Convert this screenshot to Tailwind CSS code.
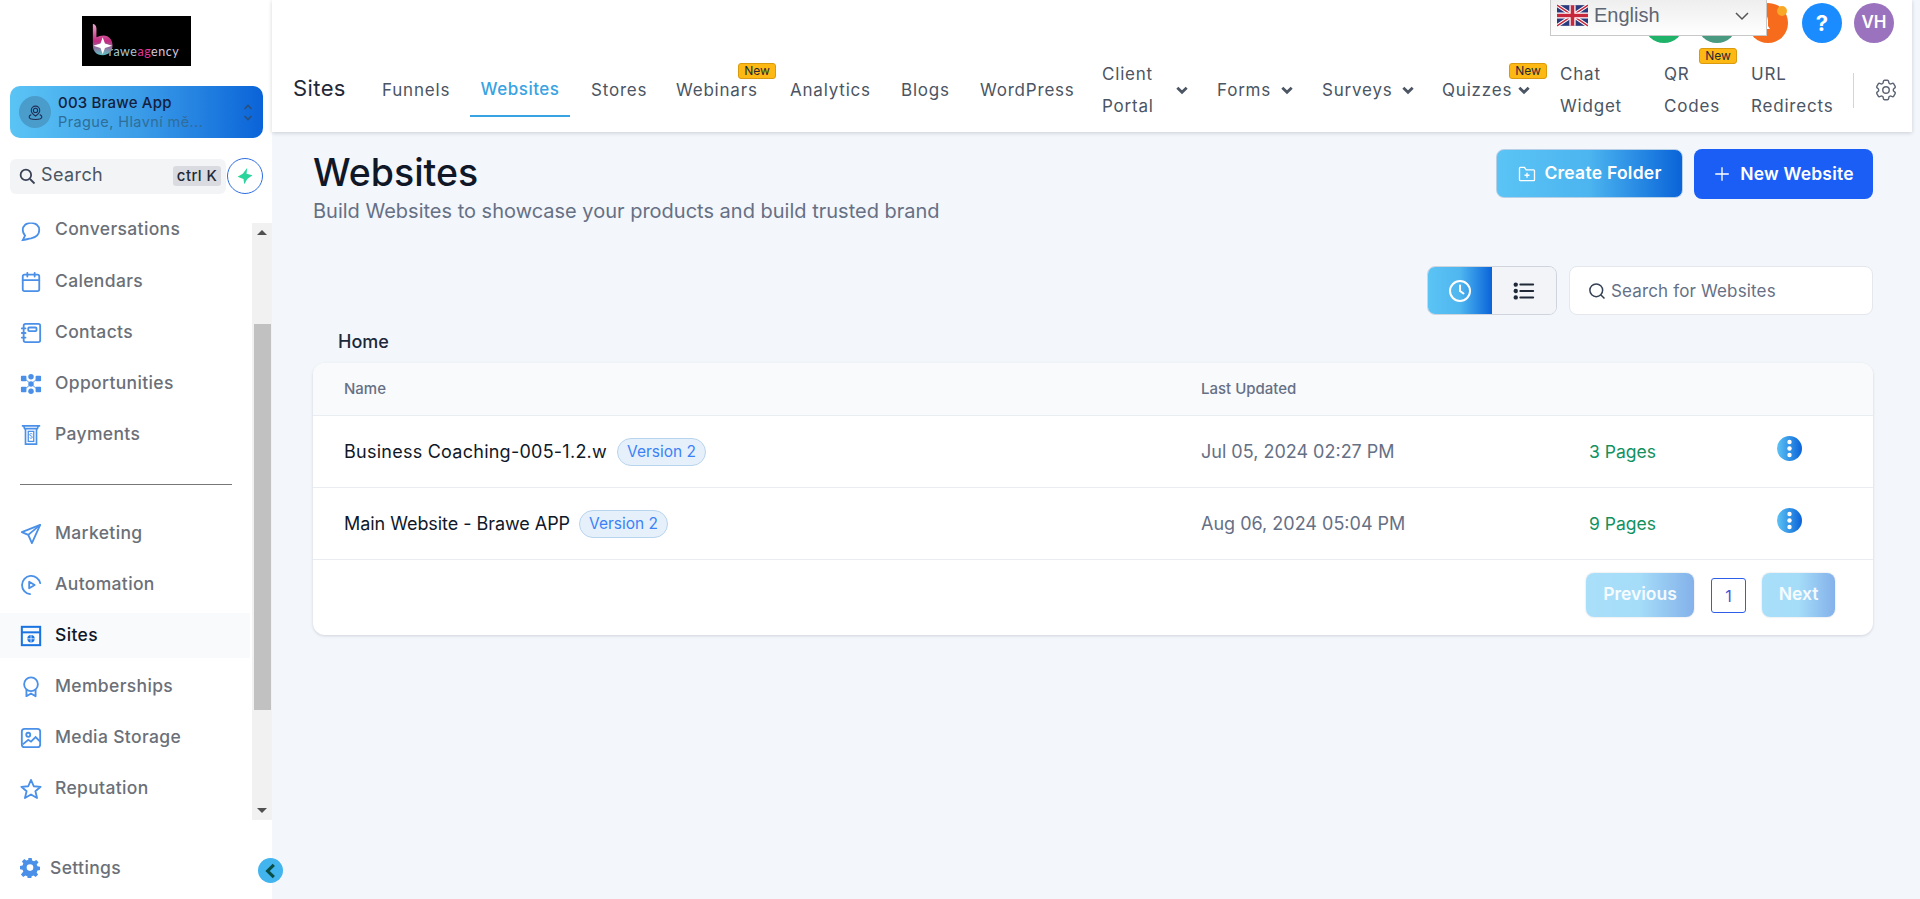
<!DOCTYPE html>
<html lang="en">
<head>
  <meta charset="UTF-8" />
  <title>Websites</title>
  <script src="https://cdn.jsdelivr.net/npm/@tailwindcss/browser@4"></script>
</head>
<body class="bg-[#f3f6fb] font-['Inter',sans-serif] h-[899px] overflow-hidden">
  <svg width="0" height="0" class="absolute">
    <defs>
      <linearGradient id="kebabGrad" x1="0" x2="1"><stop offset="0" stop-color="#5cc3f4"/><stop offset="1" stop-color="#0a63d8"/></linearGradient>
      <linearGradient id="logoGrad" x1="0" x2="0" y1="0" y2="1"><stop offset="0" stop-color="#f0a8d0"/><stop offset="0.55" stop-color="#c2287e"/><stop offset="1" stop-color="#5bc4c4"/></linearGradient>
    </defs>
  </svg>

  <div class="flex h-[899px]">
    <!-- Sidebar -->
    <aside class="w-[272px] shrink-0 bg-white relative flex flex-col">
      <div class="h-[86px] pt-4 flex justify-center">
        <div class="w-[109px] h-[50px] bg-black flex items-end pb-[7px] relative">
          <svg viewBox="0 0 30 38" class="w-[27px] h-[34px] absolute left-[9px] top-[7px]">
            <path d="M2 1c2 0 4 2 4 5v10c2-1 5-2 8-2 6 0 10 5 10 11s-4 11-11 11S2 32 2 25z" fill="url(#logoGrad)"/>
            <path d="M13 16l2.500 7 8 2.500-8 2.500-2.500 7-2.500-7-8-2.500 8-2.500z" fill="#fff"/>
          </svg>
          <span class="ml-[27px] text-[12.500px] leading-[14px] tracking-[0.5px] font-['Lato',sans-serif] text-[#a8c8d0]">rawe<span class="text-[#e0359a]">ag</span><span class="text-[#d8c6dc]">ency</span></span>
        </div>
      </div>

      <!-- Location card -->
      <div class="mx-[10px] w-[253px] h-[52px] rounded-[10px] bg-linear-to-r from-[#5bc4f5] via-[#3c9de8] to-[#0a63d8] flex items-center pl-[9px] pr-[6px]">
        <div class="w-8 h-8 rounded-full bg-[#4a9ccb] flex items-center justify-center mr-[7px]">
          <svg viewBox="0 0 24 24" class="w-[17px] h-[17px]" fill="none" stroke="#1f2f55" stroke-width="1.500"><circle cx="12" cy="9" r="3"/><path d="M12 17c-4-3-6-5.500-6-8a6 6 0 0 1 12 0c0 2.500-2 5-6 8z"/><path d="M6 15c-2 .7-3 1.700-3 3.500C3 20.500 7 22 12 22s9-1.500 9-3.500c0-1.800-1-2.800-3-3.500"/></svg>
        </div>
        <div class="flex-1 min-w-0">
          <div class="text-[15px] leading-[19px] font-medium text-[#14203d] tracking-[0.2px]">003 Brawe App</div>
          <div class="text-[14.500px] leading-[19px] text-[#2f6e99] tracking-[0.4px]">Prague, Hlavní mě...</div>
        </div>
        <svg viewBox="0 0 16 24" class="w-[14px] h-[21px] mr-[2px]" fill="none" stroke="#29507f" stroke-width="2"><path d="M4 8l4-4 4 4M4 16l4 4 4-4"/></svg>
      </div>

      <!-- Search -->
      <div class="mt-5 ml-[10px] flex items-center w-[253px]">
        <div class="w-[217px] h-[35px] bg-[#f3f4f6] rounded-[6px] flex items-center pl-2 pr-[5px]">
          <svg viewBox="0 0 24 24" class="w-[18px] h-[18px] mr-[5px]" fill="none" stroke="#3a4356" stroke-width="2.400"><circle cx="10.500" cy="10.500" r="7"/><path d="M16 16l6 6"/></svg>
          <span class="flex-1 text-[18px] leading-[24px] pb-[2px] text-[#4b5563] tracking-[0.4px]">Search</span>
          <span class="bg-[#d9dbe0] rounded-[3px] text-[15px] leading-[20px] px-[4px] text-[#1f2937] font-medium tracking-[0.4px]">ctrl K</span>
        </div>
        <div class="w-[36px] h-[36px] rounded-full border border-[#2f6fe0] bg-white flex items-center justify-center ml-[1px]">
          <svg viewBox="0 0 24 24" class="w-[18px] h-[18px]" fill="#2bd49b"><path d="M15 1l-1 8 8 2-7 5-4 7-1-7-8-3 7-4z"/></svg>
        </div>
      </div>

      <!-- Nav, scrolled a little -->
      <div class="mt-[22px] h-[604px] relative overflow-hidden">
        <nav class="-mt-[11px] text-[#6b7078] text-[17.500px] font-medium tracking-[0.35px]">
          <a class="h-[51px] flex items-center pl-5 gap-[13px]">
            <svg viewBox="0 0 24 24" class="w-[22px] h-[22px] shrink-0 [clip-path:inset(3px_0_0_0)]" fill="none" stroke="#4a90e8" stroke-width="2"><path d="M3 22l2.500-5C4.500 15.500 3 14 3 11c0-5 4-8 9-8s9 3 9 8-4 8-9 9c-3 .5-6 1.500-9 2z"/></svg>
            <span class="relative -top-[1px]">Conversations</span>
          </a>
          <a class="h-[51px] flex items-center pl-5 gap-[13px]">
            <svg viewBox="0 0 24 24" class="w-[22px] h-[22px] shrink-0" fill="none" stroke="#4a90e8" stroke-width="2" stroke-linecap="round"><rect x="3" y="4" width="18" height="18" rx="2"/><path d="M3 10h18M8 2v4M16 2v4"/></svg>
            <span>Calendars</span>
          </a>
          <a class="h-[51px] flex items-center pl-5 gap-[13px]">
            <svg viewBox="0 0 24 24" class="w-[22px] h-[22px] shrink-0" fill="none" stroke="#4a90e8" stroke-width="2" stroke-linecap="round"><rect x="4" y="2" width="18" height="20" rx="2"/><rect x="9" y="6" width="9" height="4" rx="1"/><path d="M2 7h4M2 12h4M2 17h4"/></svg>
            <span>Contacts</span>
          </a>
          <a class="h-[51px] flex items-center pl-5 gap-[13px]">
            <svg viewBox="0 0 24 24" class="w-[24px] h-[22px] shrink-0 -ml-[1px] -mr-[1px]" fill="#4a90e8"><circle cx="12" cy="12" r="3"/><circle cx="12" cy="4" r="3"/><circle cx="12" cy="20" r="3"/><rect x="1" y="3" width="6" height="6" rx="1"/><rect x="17" y="3" width="6" height="6" rx="1"/><rect x="1" y="15" width="6" height="6" rx="1"/><rect x="17" y="15" width="6" height="6" rx="1"/><path d="M6 7l6 5 6-5M6 17l6-5 6 5" stroke="#4a90e8" fill="none"/></svg>
            <span>Opportunities</span>
          </a>
          <a class="h-[51px] flex items-center pl-5 gap-[13px]">
            <svg viewBox="0 0 24 24" class="w-[22px] h-[22px] shrink-0" fill="none" stroke="#4a90e8" stroke-width="1.800"><path d="M2 2h20M4 2l1 3h14l1-3M6 5v17h12V5"/><rect x="9" y="8" width="6" height="11" stroke-width="1.400"/><path d="M13.500 11c-.5-.8-3-.8-3 .7s3 1 3 2.600-2.500 1.500-3 .7" stroke-width="1"/></svg>
            <span>Payments</span>
          </a>
          <div class="h-[24px]"></div>
          <div class="ml-5 w-[212px] border-t border-[#777]"></div>
          <div class="h-[23px]"></div>
          <a class="h-[51px] flex items-center pl-5 gap-[13px]">
            <svg viewBox="0 0 24 24" class="w-[22px] h-[22px] shrink-0" fill="none" stroke="#4a90e8" stroke-width="2" stroke-linejoin="round"><path d="M22 2L2 10l7 3 4 9z"/><path d="M22 2L9 13"/></svg>
            <span>Marketing</span>
          </a>
          <a class="h-[51px] flex items-center pl-5 gap-[13px]">
            <svg viewBox="0 0 24 24" class="w-[22px] h-[22px] shrink-0" fill="none" stroke="#4a90e8" stroke-width="2" stroke-linecap="round"><path d="M22 10A10 10 0 1 0 11 22"/><path d="M10 8.500v7l6-3.500z" stroke-linejoin="round"/></svg>
            <span>Automation</span>
          </a>
          <a class="h-[45px] my-[3px] bg-[#f9fafb] flex items-center pl-5 gap-[13px] w-[250px] text-[#101828]">
            <svg viewBox="0 0 24 24" class="w-[22px] h-[22px] shrink-0" fill="none" stroke="#1a73e0" stroke-width="2.200"><rect x="2" y="2" width="20" height="20"/><path d="M2 8h20" /><circle cx="12" cy="15" r="4" fill="#1a73e0" stroke="none"/><path d="M8 15h8M12 11v8" stroke="#fff" stroke-width="0.800"/></svg>
            <span>Sites</span>
          </a>
          <a class="h-[51px] flex items-center pl-5 gap-[13px]">
            <svg viewBox="0 0 24 24" class="w-[22px] h-[22px] shrink-0" fill="none" stroke="#4a90e8" stroke-width="2" stroke-linejoin="round"><circle cx="12" cy="9" r="7.500"/><path d="M7 15v7l5-3 5 3v-7"/></svg>
            <span>Memberships</span>
          </a>
          <a class="h-[51px] flex items-center pl-5 gap-[13px]">
            <svg viewBox="0 0 24 24" class="w-[22px] h-[22px] shrink-0" fill="none" stroke="#4a90e8" stroke-width="2"><rect x="2" y="2" width="20" height="20" rx="3"/><circle cx="9" cy="8.500" r="2.200"/><path d="M3 19l6-5 3 2 5-5 5 5"/></svg>
            <span>Media Storage</span>
          </a>
          <a class="h-[51px] flex items-center pl-5 gap-[13px]">
            <svg viewBox="0 0 24 24" class="w-[22px] h-[22px] shrink-0" fill="none" stroke="#4a90e8" stroke-width="2" stroke-linejoin="round"><path d="M12 2l3 7 7.500.6-5.700 4.800 1.800 7.400L12 18l-6.600 3.800 1.800-7.400L1.500 9.600 9 9z"/></svg>
            <span>Reputation</span>
          </a>
        </nav>
        <!-- scrollbar -->
        <div class="absolute right-0 top-[7px] w-[20px] h-[597px] bg-[#f1f1f1]">
          <div class="absolute left-[5px] top-[7px] w-0 h-0 border-x-[5px] border-x-transparent border-b-[5px] border-b-[#505050]"></div>
          <div class="absolute left-[2px] top-[101px] w-[17px] h-[386px] bg-[#c1c1c1]"></div>
          <div class="absolute left-[5px] bottom-[7px] w-0 h-0 border-x-[5px] border-x-transparent border-t-[5px] border-t-[#505050]"></div>
        </div>
      </div>

      <!-- Settings -->
      <div class="mt-[35px] pl-5 flex items-center gap-[10px] text-[#6b7078] text-[17.500px] font-medium tracking-[0.35px]">
        <svg viewBox="0 0 24 24" class="w-[20px] h-[20px]" fill="#4a90e8"><path fill-rule="evenodd" d="M10 1h4l.6 3 2.300 1 2.600-1.700 2.800 2.800L20 8.700l1 2.300 3 .6v3.800l-3 .6-1 2.300 1.700 2.600-2.800 2.800-2.600-1.700-2.300 1-.6 3h-4l-.6-3-2.300-1-2.600 1.700-2.800-2.800L4 17.300l-1-2.300-3-.6v-3.800l3-.6 1-2.300-1.700-2.600 2.800-2.800 2.600 1.700 2.300-1zm2 7.500a4 4 0 1 0 0 8 4 4 0 0 0 0-8z" transform="translate(0 -1)"/></svg>
        <span>Settings</span>
      </div>
      <button class="absolute left-[258px] top-[858px] w-[25px] h-[25px] rounded-full bg-[#42b4ee] flex items-center justify-center z-10">
        <svg viewBox="0 0 16 16" class="w-[18px] h-[18px]" fill="none" stroke="#0a4f45" stroke-width="2.800"><path d="M10.500 2.500L5 8l5.500 5.500"/></svg>
      </button>
    </aside>

    <!-- Main -->
    <main class="flex-1 min-w-0">
      <!-- Top bar -->
      <header class="w-[1640px] h-[132px] bg-white shadow-[0_1px_4px_rgba(16,24,40,0.18)] relative">
        <div class="absolute top-[3px] left-[1372px] w-[40px] h-[40px] rounded-full bg-[#1fb36a]"></div>
        <div class="absolute top-[3px] left-[1425px] w-[40px] h-[40px] rounded-full bg-[#4a9a82]"></div>
        <div class="absolute top-[3px] left-[1476px] w-[40px] h-[40px] rounded-full bg-[#f76b1c] flex items-center justify-center">
          <svg viewBox="0 0 24 24" class="w-[24px] h-[24px] -ml-[14px]" fill="#fff"><path d="M12 2a7 7 0 0 0-7 7v6l-2 3h18l-2-3V9a7 7 0 0 0-7-7zM10 19a2 2 0 0 0 4 0z"/></svg>
          <span class="absolute right-[1px] top-[3px] w-[10px] h-[10px] rounded-full bg-[#f9a825]"></span>
        </div>
        <div class="absolute top-[3px] left-[1530px] w-[40px] h-[40px] rounded-full bg-[#1a8cff] flex items-center justify-center text-white text-[22px] font-bold">?</div>
        <div class="absolute top-[3px] left-[1582px] w-[40px] h-[40px] rounded-full bg-[#9b72bd] flex items-center justify-center text-white text-[17px] font-semibold">VH</div>

        <!-- language picker -->
        <div class="absolute left-[1278px] top-0 w-[217px] h-[36px] pb-[5px] bg-linear-to-b from-[#eeeeee] to-white border border-[#c8c8c8] border-t-0 flex items-center pl-[6px] z-10 font-['Liberation_Sans',sans-serif] text-[20px] text-[#5f6673]">
          <svg viewBox="0 0 60 40" class="w-[31px] h-[23px] mr-[6px]">
            <rect width="60" height="40" fill="#2a3a7c"/>
            <path d="M0 0l60 40M60 0L0 40" stroke="#fff" stroke-width="7"/>
            <path d="M0 0l60 40M60 0L0 40" stroke="#c8283c" stroke-width="3"/>
            <path d="M30 0v40M0 20h60" stroke="#fff" stroke-width="12"/>
            <path d="M30 0v40M0 20h60" stroke="#c8283c" stroke-width="7"/>
          </svg>
          <span>English</span>
          <svg viewBox="0 0 16 16" class="w-[16px] h-[16px] absolute right-[16px] top-[8px]" fill="none" stroke="#555" stroke-width="1.500"><path d="M2 5l6 6 6-6"/></svg>
        </div>

        <!-- Tabs -->
        <div class="absolute left-0 top-[53px] w-full h-[74px] flex items-center text-[17px] text-[#4b5563] tracking-[0.8px]">
          <div class="w-[110px] pl-[21px] text-[22px] text-[#1f2937] tracking-[0.4px] -mt-[4px]">Sites</div>
          <a class="w-[88px] pt-[2px]">Funnels</a>
          <a class="w-[100px] h-[64px] pt-[12px] mr-[21px] self-start flex items-center justify-center text-[#38a3e3] font-medium tracking-[0.5px] border-b-2 border-[#38a3e3]">Websites</a>
          <a class="w-[85px] pt-[2px]">Stores</a>
          <a class="w-[114px] pt-[2px] relative">Webinars
            <span class="absolute -top-[13px] left-[62px] w-[38px] h-[16px] rounded-[3px] bg-[#fdb813] border border-[#d99a10] text-[12px] leading-[14px] text-center text-[#1f2937] tracking-normal">New</span>
          </a>
          <a class="w-[111px] pt-[2px]">Analytics</a>
          <a class="w-[79px] pt-[2px]">Blogs</a>
          <a class="w-[122px] pt-[2px]">WordPress</a>
          <a class="w-[74px] leading-[32px]">Client<br />Portal</a>
          <svg viewBox="0 0 12 12" class="w-[14px] h-[14px] -ml-[1px] mr-[28px]" fill="none" stroke="#4b5563" stroke-width="2.400"><path d="M2 4l4 4 4-4"/></svg>
          <a class="w-[64px] pt-[2px]">Forms</a>
          <svg viewBox="0 0 12 12" class="w-[14px] h-[14px] -ml-[1px] mr-[28px]" fill="none" stroke="#4b5563" stroke-width="2.400"><path d="M2 4l4 4 4-4"/></svg>
          <a class="w-[80px] pt-[2px]">Surveys</a>
          <svg viewBox="0 0 12 12" class="w-[14px] h-[14px] -ml-[1px] mr-[27px]" fill="none" stroke="#4b5563" stroke-width="2.400"><path d="M2 4l4 4 4-4"/></svg>
          <a class="w-[76px] pt-[2px] relative">Quizzes
            <span class="absolute -top-[13px] left-[67px] w-[38px] h-[16px] rounded-[3px] bg-[#fdb813] border border-[#d99a10] text-[12px] leading-[14px] text-center text-[#1f2937] tracking-normal">New</span>
          </a>
          <svg viewBox="0 0 12 12" class="w-[14px] h-[14px] -ml-[1px] mr-[29px]" fill="none" stroke="#4b5563" stroke-width="2.400"><path d="M2 4l4 4 4-4"/></svg>
          <a class="w-[104px] leading-[32px]">Chat<br />Widget</a>
          <a class="w-[87px] leading-[32px] relative">QR<br />Codes
            <span class="absolute -top-[10px] left-[35px] w-[38px] h-[16px] rounded-[3px] bg-[#fdb813] border border-[#d99a10] text-[12px] leading-[14px] text-center text-[#1f2937] tracking-normal">New</span>
          </a>
          <a class="w-[102px] leading-[32px]">URL<br />Redirects</a>
          <div class="w-[1px] h-[35px] bg-[#d0d5dd]"></div>
          <svg viewBox="0 0 24 24" class="w-[26px] h-[26px] ml-[19px]" fill="none" stroke="#5b6472" stroke-width="1.300"><path d="M9.594 3.94c.09-.542.56-.94 1.110-.94h2.593c.55 0 1.020.398 1.110.94l.213 1.281c.063.374.313.686.645.870.074.040.147.083.220.127.325.196.72.257 1.075.124l1.217-.456a1.125 1.125 0 0 1 1.370.490l1.296 2.247a1.125 1.125 0 0 1-.260 1.431l-1.003.827c-.293.241-.438.613-.430.992a7.723 7.723 0 0 1 0 .255c-.008.378.137.750.430.991l1.004.827c.424.350.534.955.260 1.430l-1.298 2.247a1.125 1.125 0 0 1-1.369.491l-1.217-.456c-.355-.133-.750-.072-1.076.124a6.470 6.470 0 0 1-.220.128c-.331.183-.581.495-.644.869l-.213 1.281c-.090.543-.560.940-1.110.940h-2.594c-.550 0-1.019-.398-1.110-.940l-.213-1.281c-.062-.374-.312-.686-.644-.870a6.520 6.520 0 0 1-.220-.127c-.325-.196-.720-.257-1.076-.124l-1.217.456a1.125 1.125 0 0 1-1.369-.490l-1.297-2.247a1.125 1.125 0 0 1 .260-1.431l1.004-.827c.292-.240.437-.613.430-.991a6.932 6.932 0 0 1 0-.255c.007-.380-.138-.751-.430-.992l-1.004-.827a1.125 1.125 0 0 1-.260-1.430l1.297-2.247a1.125 1.125 0 0 1 1.370-.491l1.216.456c.356.133.751.072 1.076-.124.072-.044.146-.086.220-.128.332-.183.582-.495.644-.869l.214-1.280Z"/><circle cx="12" cy="12" r="3"/></svg>
        </div>
      </header>

      <!-- Page content -->
      <div class="w-[1560px] ml-[41px]">
        <div class="flex items-start justify-between h-[134px] pt-[17px]">
          <div class="pt-[1px]">
            <h1 class="text-[37.500px] leading-[46px] font-medium text-[#101828]">Websites</h1>
            <p class="text-[20px] leading-[28px] text-[#667085] mt-[1px]">Build Websites to showcase your products and build trusted brand</p>
          </div>
          <div class="flex gap-[11px]">
            <button class="w-[187px] h-[49px] rounded-[8px] bg-linear-to-r from-[#5bc4f5] via-[#4cb4ef] to-[#0a63d8] border border-[#b8cfe8] text-white text-[17.500px] font-semibold tracking-[0.25px] flex items-center justify-center gap-[7px]">
              <svg viewBox="0 0 24 24" class="w-5 h-5" fill="none" stroke="#fff" stroke-width="1.600" stroke-linejoin="round"><path d="M3 7V5a1 1 0 0 1 1-1h5l2 3h9a1 1 0 0 1 1 1v11a1 1 0 0 1-1 1H4a1 1 0 0 1-1-1z"/><path d="M12 10.500v6M9 13.500h6"/></svg>
              Create Folder
            </button>
            <button class="w-[179px] h-[50px] rounded-[8px] bg-[#1a5ef5] text-white text-[17.500px] font-semibold tracking-[0.2px] flex items-center justify-center gap-[9px]">
              <svg viewBox="0 0 24 24" class="w-[18px] h-[18px]" fill="none" stroke="#fff" stroke-width="1.800"><path d="M12 3v18M3 12h18"/></svg>
              New Website
            </button>
          </div>
        </div>

        <div class="flex justify-end gap-3 h-[49px]">
          <div class="flex w-[130px] h-[49px] rounded-[8px] border border-[#d0d5dd] overflow-hidden">
            <div class="w-[64px] bg-linear-to-r from-[#5bc4f5] via-[#4fb6ef] to-[#0a63d8] flex items-center justify-center">
              <svg viewBox="0 0 24 24" class="w-6 h-6" fill="none" stroke="#fff" stroke-width="2" stroke-linecap="round"><circle cx="12" cy="12" r="10"/><path d="M12 6.500V12l3.500 2.500"/></svg>
            </div>
            <div class="flex-1 bg-[#f2f4f7] flex items-center justify-center">
              <svg viewBox="0 0 24 24" class="w-[22px] h-[22px]" fill="none" stroke="#1f2937" stroke-width="2.200" stroke-linecap="round"><path d="M8 5h14M8 12h14M8 19h14"/><circle cx="3" cy="5" r="1.300" fill="#1f2937"/><circle cx="3" cy="12" r="1.300" fill="#1f2937"/><circle cx="3" cy="19" r="1.300" fill="#1f2937"/></svg>
            </div>
          </div>
          <div class="w-[304px] h-[49px] bg-white rounded-[8px] border border-[#e4e7ec] flex items-center pl-[18px]">
            <svg viewBox="0 0 24 24" class="w-[18px] h-[18px] mr-[5px]" fill="none" stroke="#344054" stroke-width="2"><circle cx="11" cy="11" r="8.500"/><path d="M17 17l5 5"/></svg>
            <span class="text-[17px] leading-[26px] pt-[1px] text-[#667085] tracking-[0.15px]">Search for Websites</span>
          </div>
        </div>

        <div class="pl-[25px] pt-[4px] h-[48px] flex items-center text-[18px] font-medium text-[#1d2939]">Home</div>

        <!-- Table -->
        <div class="bg-white rounded-[12px] shadow-[0_1px_3px_rgba(16,24,40,0.15)] overflow-hidden">
          <div class="h-[53px] bg-[#f9fafb] border-b border-[#e9ecf1] flex items-center text-[15px] font-medium text-[#667085]">
            <div class="w-[888px] pl-[31px]">Name</div>
            <div>Last Updated</div>
          </div>
          <div class="h-[72px] border-b border-[#e9ecf1] flex items-center">
            <div class="w-[888px] pl-[31px] flex items-center gap-[10px]">
              <span class="text-[18px] tracking-[0.25px] text-[#101828]">Business Coaching-005-1.2.w</span>
              <span class="h-[28px] px-[9px] rounded-full bg-[#e6f0fb] border border-[#b9d4ee] text-[15.500px] leading-[26px] text-[#3b82f6]">Version 2</span>
            </div>
            <div class="w-[388px] text-[18px] text-[#667085]">Jul 05, 2024 02:27 PM</div>
            <div class="w-[188px] pt-[1px] text-[17.500px] text-[#12915f]">3 Pages</div>
            <svg viewBox="0 0 25 25" class="w-[25px] h-[25px] -mt-[7px]"><circle cx="12.500" cy="12.500" r="12.500" fill="url(#kebabGrad)"/><circle cx="12.500" cy="6" r="2.200" fill="#fff"/><circle cx="12.500" cy="12.500" r="2.200" fill="#fff"/><circle cx="12.500" cy="19" r="2.200" fill="#fff"/></svg>
          </div>
          <div class="h-[72px] border-b border-[#e9ecf1] flex items-center">
            <div class="w-[888px] pl-[31px] flex items-center gap-[9px]">
              <span class="text-[18px] tracking-[-0.05px] text-[#101828]">Main Website - Brawe APP</span>
              <span class="h-[28px] px-[9px] rounded-full bg-[#e6f0fb] border border-[#b9d4ee] text-[15.500px] leading-[26px] text-[#3b82f6]">Version 2</span>
            </div>
            <div class="w-[388px] text-[18px] text-[#667085]">Aug 06, 2024 05:04 PM</div>
            <div class="w-[188px] pt-[1px] text-[17.500px] text-[#12915f]">9 Pages</div>
            <svg viewBox="0 0 25 25" class="w-[25px] h-[25px] -mt-[7px]"><circle cx="12.500" cy="12.500" r="12.500" fill="url(#kebabGrad)"/><circle cx="12.500" cy="6" r="2.200" fill="#fff"/><circle cx="12.500" cy="12.500" r="2.200" fill="#fff"/><circle cx="12.500" cy="19" r="2.200" fill="#fff"/></svg>
          </div>
          <div class="h-[75px] flex items-start justify-end pt-[13px] pr-[38px] text-[17.500px] font-semibold text-white">
            <button class="w-[108px] h-[44px] rounded-[8px] bg-linear-to-r from-[#a9dff9] via-[#a5dcf8] to-[#84b1ea] text-white/90 pb-[2px] shadow-[0_0_2px_rgba(16,24,40,0.2)]">Previous</button>
            <div class="w-[35px] h-[35px] mt-[5px] ml-[17px] mr-[16px] rounded-[3px] border border-[#2f5fe8] text-[#4a55d8] flex items-center justify-center font-normal text-[16px]">1</div>
            <button class="w-[73px] h-[44px] rounded-[8px] bg-linear-to-r from-[#a9dff9] via-[#a5dcf8] to-[#84b1ea] text-white/90 pb-[2px] shadow-[0_0_2px_rgba(16,24,40,0.2)]">Next</button>
          </div>
        </div>
      </div>
    </main>
  </div>
</body>
</html>
